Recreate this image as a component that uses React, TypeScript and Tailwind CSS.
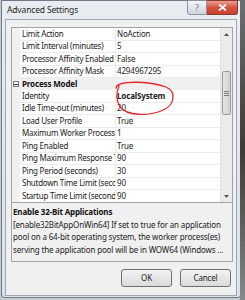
import React from "react";

type Row = { name: string; value?: string; bold?: boolean; category?: boolean };

const rows: Row[] = [
  { name: "Limit Action", value: "NoAction" },
  { name: "Limit Interval (minutes)", value: "5" },
  { name: "Processor Affinity Enabled", value: "False" },
  { name: "Processor Affinity Mask", value: "4294967295" },
  { name: "Process Model", category: true },
  { name: "Identity", value: "LocalSystem", bold: true },
  { name: "Idle Time-out (minutes)", value: "20" },
  { name: "Load User Profile", value: "True" },
  { name: "Maximum Worker Processes", value: "1" },
  { name: "Ping Enabled", value: "True" },
  { name: "Ping Maximum Response Time (seconds)", value: "90" },
  { name: "Ping Period (seconds)", value: "30" },
  { name: "Shutdown Time Limit (seconds)", value: "90" },
  { name: "Startup Time Limit (seconds)", value: "90" },
];

const descLines = [
  "[enable32BitAppOnWin64] If set to true for an application",
  "pool on a 64-bit operating system, the worker process(es)",
  "serving the application pool will be in WOW64 (Windows ...",
];

function GridRow({ row }: { row: Row }) {
  if (row.category) {
    return (
      <div className="flex h-[12.5px] items-center bg-[#f0f0f0]">
        <div className="flex w-[8px] justify-center">
          <span className="flex h-[6px] w-[6px] items-center justify-center border border-[#7a7a7a] bg-white">
            <span className="h-px w-[4px] bg-[#333]" />
          </span>
        </div>
        <span className="pl-[2px] font-bold text-[#111]">{row.name}</span>
      </div>
    );
  }
  return (
    <div className="flex h-[12.5px]">
      <div className="w-[8px] bg-[#f0f0f0]" />
      <div className="flex w-[96px] items-center overflow-hidden whitespace-nowrap border-r border-b border-[#ececec] pl-[2px] tracking-[-0.25px] text-[#222]">
        {row.name}
      </div>
      <div
        className={
          "flex flex-1 items-center overflow-hidden whitespace-nowrap border-b border-[#ececec] pl-[1px] text-[#222] " +
          (row.bold ? "font-bold" : "")
        }
      >
        {row.value}
      </div>
    </div>
  );
}

function Scrollbar() {
  return (
    <div className="relative flex w-[12px] flex-col border-l border-[#e3e3e3] bg-[#ebebeb]">
      <div className="flex h-[12px] items-center justify-center">
        <svg width="5" height="3" viewBox="0 0 5 3">
          <path d="M0 3 L2.5 0 L5 3 Z" fill="#555" />
        </svg>
      </div>
      <div className="h-[31px]" />
      <div className="mx-[1px] flex h-[44px] flex-col items-center justify-center gap-[1px] rounded-[2px] border border-[#9a9a9a] bg-gradient-to-r from-[#e6e6e6] to-[#d2d2d2]">
        <span className="h-px w-[5px] bg-[#7d7d7d]" />
        <span className="h-px w-[5px] bg-[#7d7d7d]" />
        <span className="h-px w-[5px] bg-[#7d7d7d]" />
      </div>
      <div className="flex-1" />
      <div className="flex h-[12px] items-center justify-center">
        <svg width="5" height="3" viewBox="0 0 5 3">
          <path d="M0 0 L2.5 3 L5 0 Z" fill="#555" />
        </svg>
      </div>
    </div>
  );
}

export default function App() {
  return (
    <div
      className="relative h-[300px] w-[245px] overflow-hidden bg-[#c7ccd2] text-[8px] tracking-[-0.15px]"
      style={{ fontFamily: "'Noto Sans', 'Open Sans', sans-serif" }}
    >
      <div className="absolute right-0 top-0 h-full w-[5px] bg-gradient-to-b from-[#6b6f73] via-[#3f3a33] to-[#85888c]" />
      <div className="ml-[1px] flex h-[298px] w-[240px] flex-col rounded-b-[3px] border border-[#6f7a86] bg-gradient-to-b from-[#e9edf2] to-[#dbe2ea] px-[3px] pb-[1px]">
        {/* Title bar */}
        <div className="relative flex h-[18px] items-center">
          <span className="pl-[2px] text-[8.5px] text-[#1e1e1e]">Advanced Settings</span>
          <div className="absolute -top-px right-[-1px] flex">
            <div className="flex h-[15px] w-[20px] items-center justify-center rounded-bl-[3px] border border-[#8a929b] bg-gradient-to-b from-[#f4f6f8] to-[#cfd5dc] text-[9px] leading-none text-[#6b737c]">
              ?
            </div>
            <div className="flex h-[15px] w-[31px] items-center justify-center rounded-br-[3px] border border-l-0 border-[#8a3a30] bg-gradient-to-b from-[#e7a08f] via-[#d4523f] to-[#c8412f]">
              <svg width="9" height="7" viewBox="0 0 9 7">
                <path d="M1 0.5 L8 6.5 M8 0.5 L1 6.5" stroke="white" strokeWidth="1.8" />
              </svg>
            </div>
          </div>
        </div>

        {/* Client area */}
        <div className="flex flex-1 flex-col border border-[#9ea7b1] bg-[#f0f0f0] pl-[5px] pr-[3px] pt-[7px]">
          <div className="relative flex h-[176px] border border-[#a3a3a3] bg-white">
            <div className="flex flex-1 flex-col overflow-hidden">
              {rows.map((r) => (
                <GridRow key={r.name} row={r} />
              ))}
            </div>
            <Scrollbar />
            <svg
              className="absolute left-0 top-0"
              width="222"
              height="176"
              viewBox="12 28 222 176"
              fill="none"
            >
              <path
                d="M116 88 C117 80 150 81 166 87 C177 92 175 106 161 111 C148 116 127 116 120 107 C116 100 116 93 119 86"
                stroke="#e3242b"
                strokeWidth="1.3"
                strokeLinecap="round"
              />
            </svg>
          </div>
          <div className="h-[59px] border border-t-0 border-[#a3a3a3] bg-[#f0f0f0] px-[1px] pt-[3px] leading-[12.5px] text-[#222]">
            <div className="font-bold text-[#111]">Enable 32-Bit Applications</div>
            {descLines.map((l) => (
              <div key={l} className="overflow-hidden whitespace-nowrap">
                {l}
              </div>
            ))}
          </div>
          <div className="flex justify-end gap-[8px] pr-[2px] pt-[7px]">
            <button className="h-[18px] w-[51px] rounded-[3px] border border-[#707070] bg-gradient-to-b from-[#f3f3f3] to-[#dadada] text-[#222]">
              OK
            </button>
            <button className="h-[18px] w-[51px] rounded-[3px] border border-[#707070] bg-gradient-to-b from-[#f3f3f3] to-[#dadada] text-[#222]">
              Cancel
            </button>
          </div>
        </div>
      </div>
    </div>
  );
}
